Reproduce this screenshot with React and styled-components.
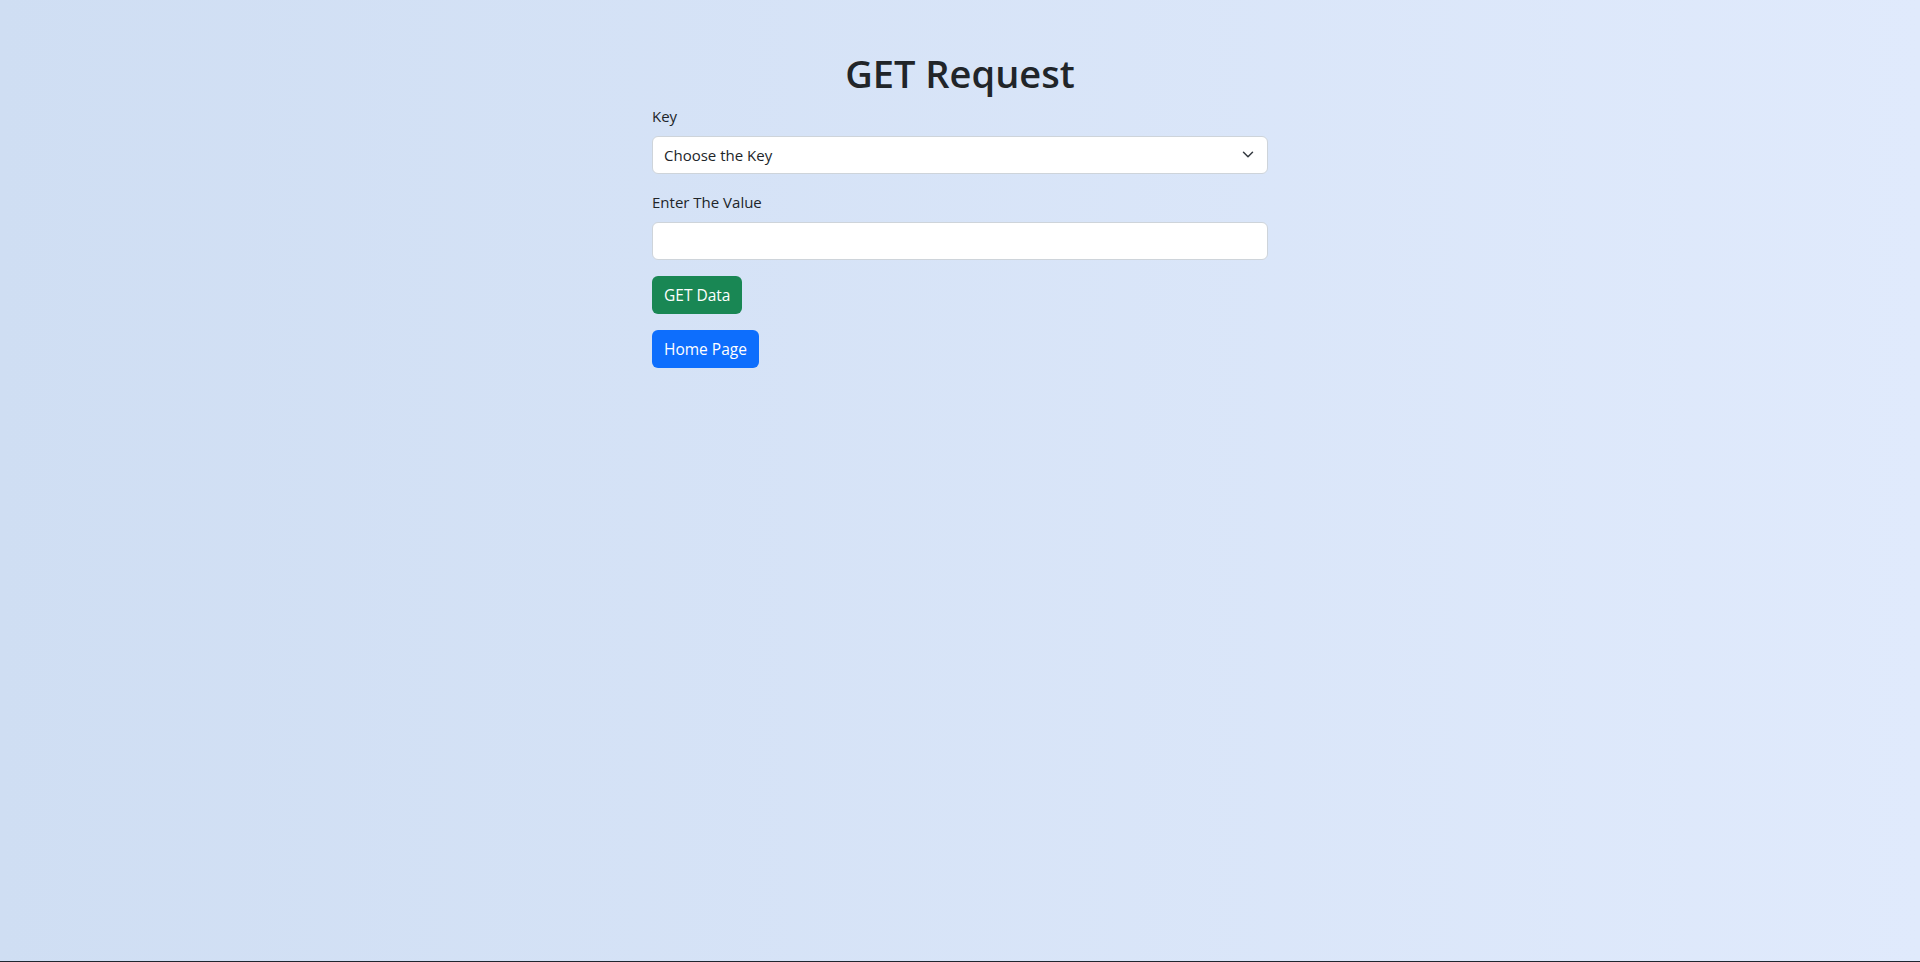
import React from 'react';
import styled, { createGlobalStyle } from 'styled-components';

const GlobalStyle = createGlobalStyle`
  * {
    box-sizing: border-box;
  }

  body {
    margin: 0;
    font-family: 'Open Sans', 'Liberation Sans', sans-serif;
    color: #212529;
  }
`;

const Page = styled.div`
  height: 100vh;
  background: linear-gradient(to right, #cfdef3, #e0eafc);
  border-bottom: 1px solid #1f2630;
`;

const Container = styled.div`
  width: 616px;
  margin: 0 auto;
  padding-top: 49px;
`;

const Title = styled.h1`
  margin: 0 0 7px;
  text-align: center;
  font-size: 38px;
  font-weight: 600;
  line-height: 48px;
`;

const Field = styled.div`
  margin-bottom: 16px;
`;

const Label = styled.label`
  display: block;
  margin-bottom: 8px;
  font-size: 15px;
  line-height: 24px;
`;

const SelectWrap = styled.div`
  position: relative;
`;

const Select = styled.select`
  display: block;
  width: 100%;
  height: 38px;
  padding: 0 36px 0 11px;
  border: 1px solid #ced4da;
  border-radius: 6px;
  background: #fff;
  appearance: none;
  font-family: inherit;
  font-size: 15px;
  color: #212529;
`;

const Chevron = styled.svg`
  position: absolute;
  right: 14px;
  top: 14px;
  width: 12px;
  height: 9px;
  pointer-events: none;
`;

const Input = styled.input`
  display: block;
  width: 100%;
  height: 38px;
  padding: 0 12px;
  border: 1px solid #ced4da;
  border-radius: 6px;
  background: #fff;
  font-family: inherit;
  font-size: 15px;
`;

const Button = styled.button`
  display: block;
  height: 38px;
  padding: 0 12px;
  margin-bottom: 16px;
  border: none;
  border-radius: 6px;
  background: ${props => (props.variant === 'success' ? '#198754' : '#0d6efd')};
  color: #fff;
  font-family: inherit;
  font-size: 15.5px;
  cursor: pointer;
`;

const App = () => {
  return (
    <Page>
      <GlobalStyle />
      <Container>
        <Title>GET Request</Title>
        <Field>
          <Label>Key</Label>
          <SelectWrap>
            <Select defaultValue="">
              <option value="">Choose the Key</option>
            </Select>
            <Chevron viewBox="0 0 16 12">
              <path
                d="m2 3 6 6 6-6"
                fill="none"
                stroke="#343a40"
                strokeWidth="2"
                strokeLinecap="round"
                strokeLinejoin="round"
              />
            </Chevron>
          </SelectWrap>
        </Field>
        <Field>
          <Label>Enter The Value</Label>
          <Input type="text" />
        </Field>
        <Button variant="success">GET Data</Button>
        <Button variant="primary">Home Page</Button>
      </Container>
    </Page>
  );
};

export default App;
